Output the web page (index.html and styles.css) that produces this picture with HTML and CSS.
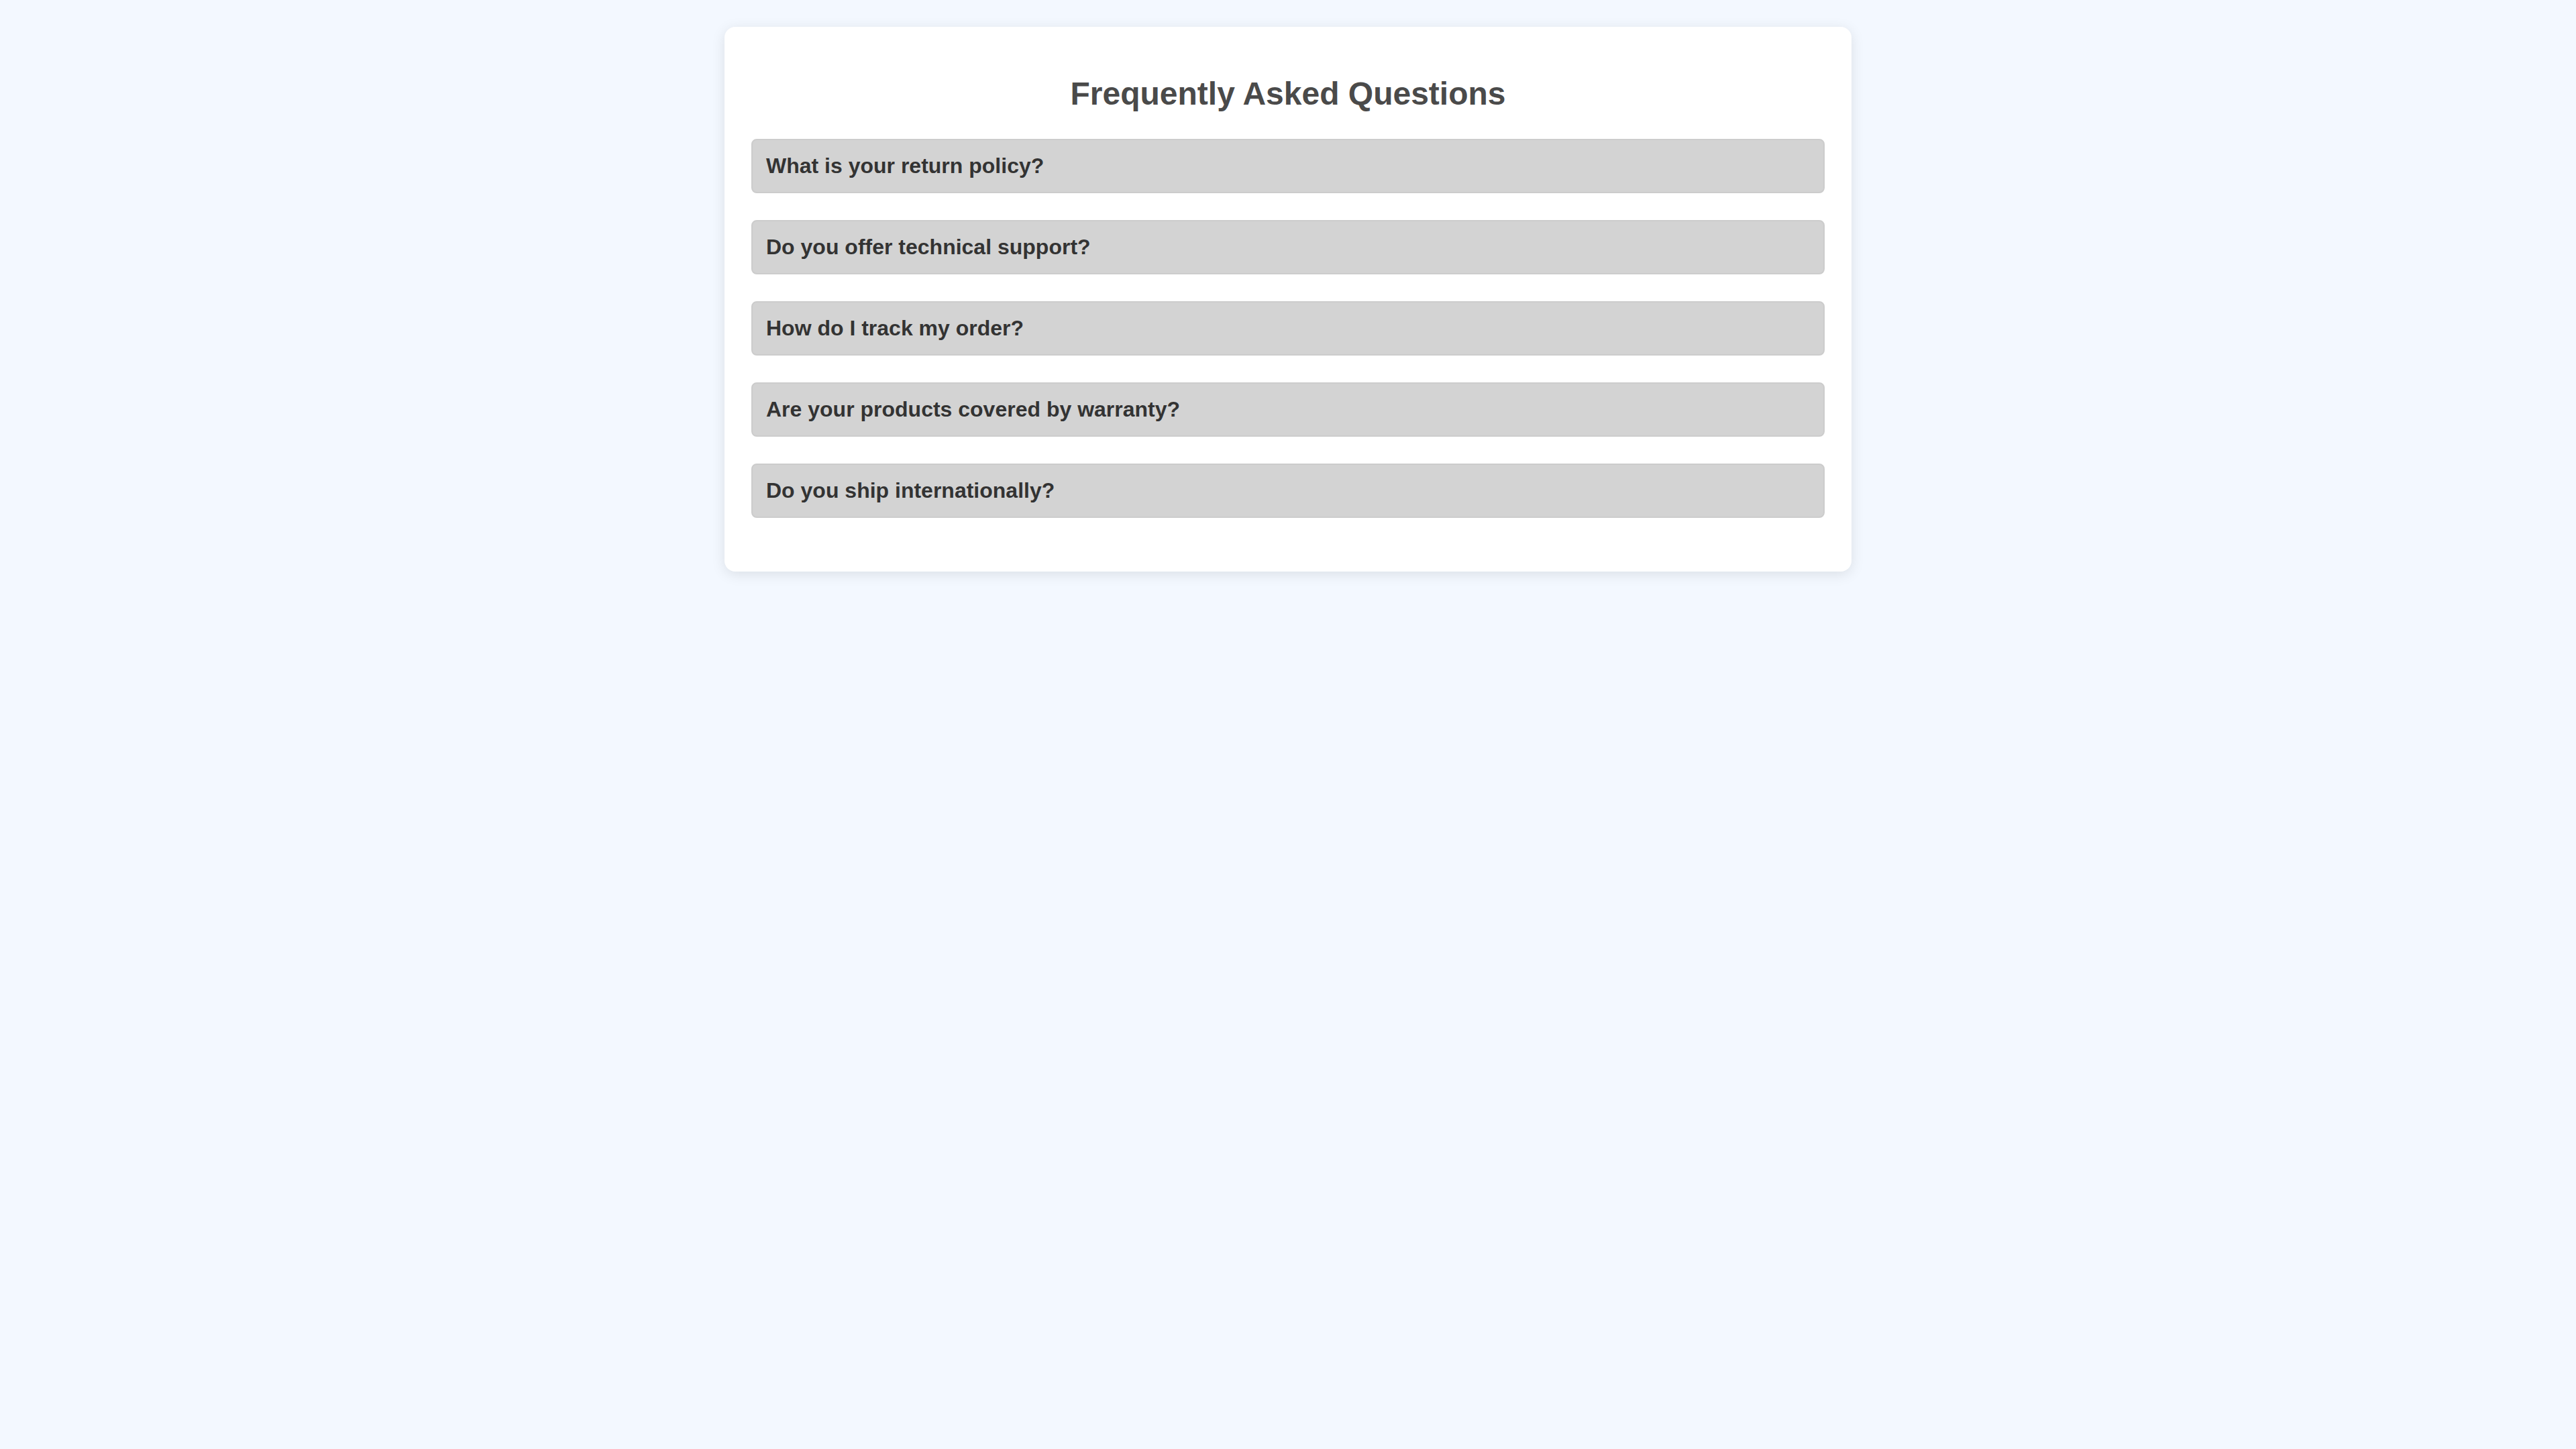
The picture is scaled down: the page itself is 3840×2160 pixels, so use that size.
FILE: index.html
```html
<!DOCTYPE html>
<html lang="en">
<head>
  <meta charset="utf-8">
  <meta name="viewport" content="width=device-width, initial-scale=1">
  <title>Frequently Asked Questions</title>
  <link rel="stylesheet" href="styles.css">
</head>
<body>
  <main class="faq">
    <h1 class="faq-title">Frequently Asked Questions</h1>
    <div class="faq-item"><button class="faq-question" type="button">What is your return policy?</button></div>
    <div class="faq-item"><button class="faq-question" type="button">Do you offer technical support?</button></div>
    <div class="faq-item"><button class="faq-question" type="button">How do I track my order?</button></div>
    <div class="faq-item"><button class="faq-question" type="button">Are your products covered by warranty?</button></div>
    <div class="faq-item"><button class="faq-question" type="button">Do you ship internationally?</button></div>
  </main>
</body>
</html>
```
FILE: styles.css
```css
* {
  box-sizing: border-box;
}

body {
  margin: 0;
  padding: 40px;
  background: #f3f8ff;
  color: #333;
  font-family: "Liberation Sans", Arial, sans-serif;
}

.faq {
  max-width: 1680px;
  margin: 0 auto;
  padding: 40px;
  background: #fff;
  border-radius: 16px;
  box-shadow: 0 4px 20px rgba(0, 0, 0, 0.1);
}

.faq-title {
  margin: 32px 0 40px;
  color: #4a4a4a;
  font-size: 48px;
  line-height: 55px;
  text-align: center;
}

.faq-item {
  margin-bottom: 40px;
}

.faq-question {
  display: block;
  width: 100%;
  padding: 20px;
  border: 2px solid #ccc;
  border-radius: 8px;
  background: #d3d3d3;
  color: #333;
  font-family: inherit;
  font-size: 32px;
  font-weight: bold;
  line-height: 37px;
  text-align: left;
  cursor: pointer;
}
```
